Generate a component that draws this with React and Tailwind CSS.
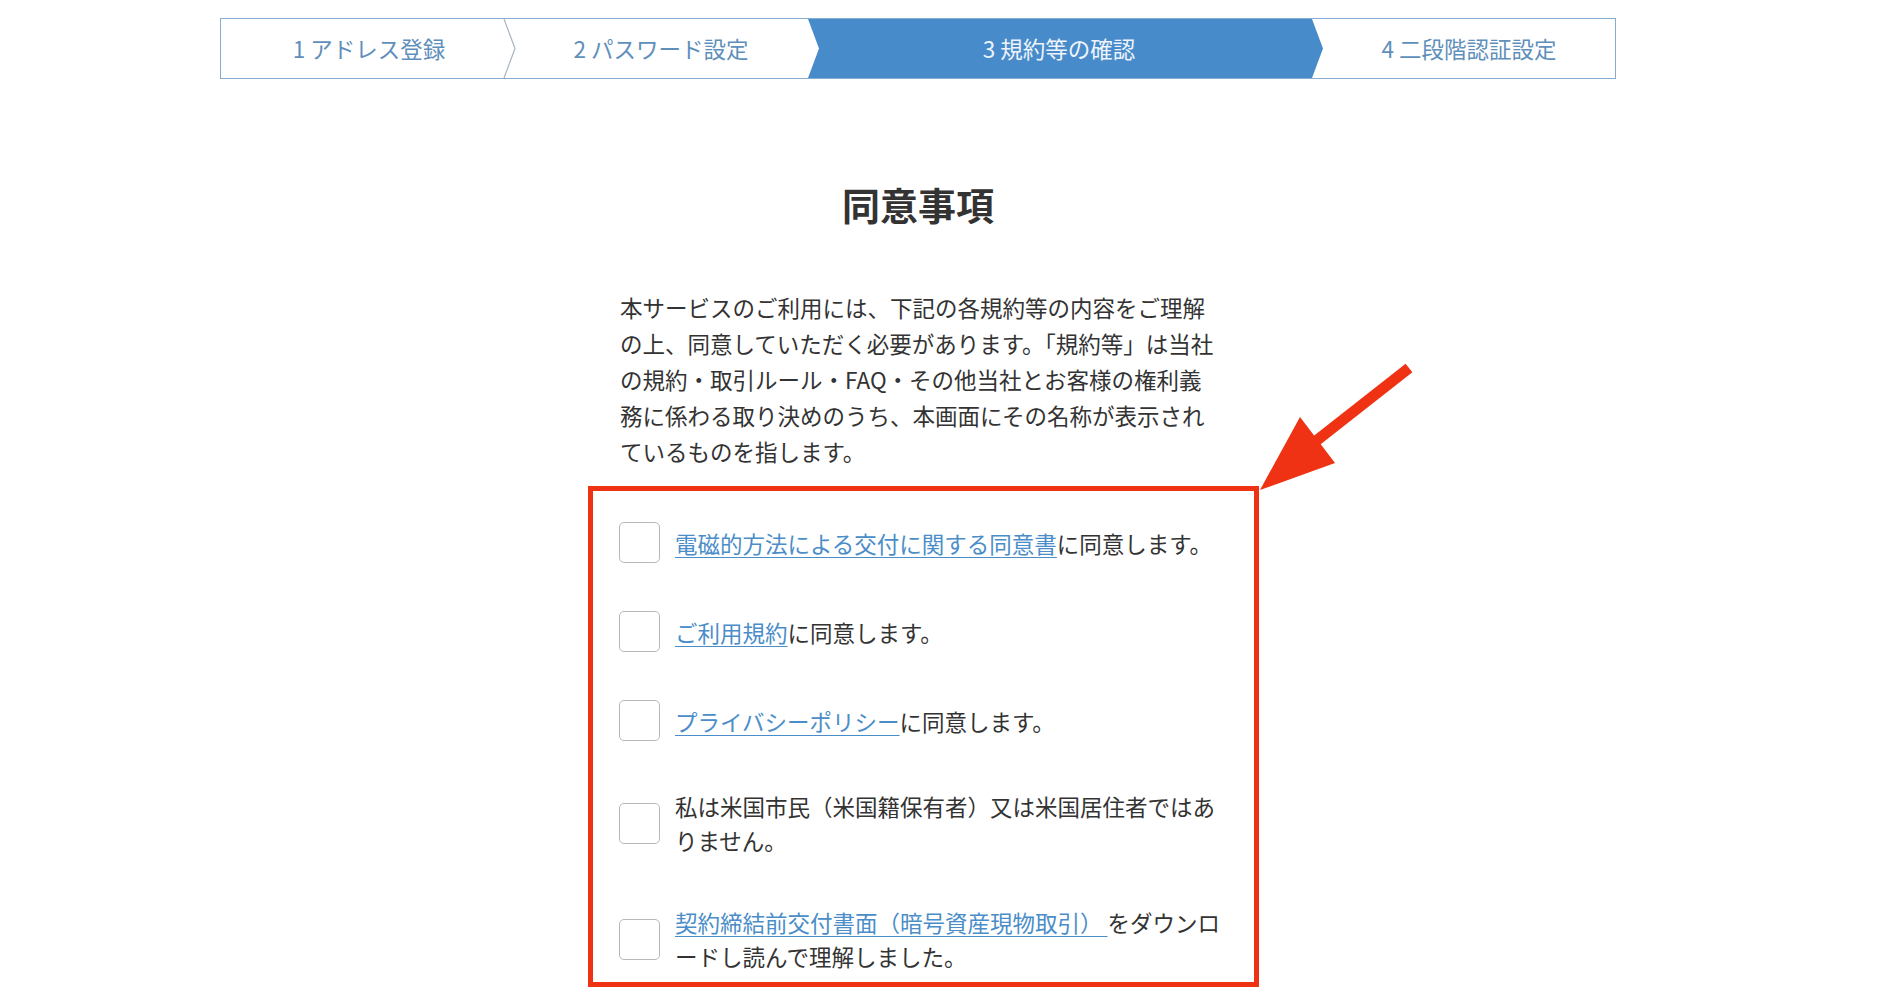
import React from "react";

const steps = [
  { label: "1 アドレス登録", w: "w-[283px]", pad: "pl-[13px]" },
  { label: "2 パスワード設定", w: "w-[304px]", pad: "pl-[10px]" },
  { label: "3 規約等の確認", w: "w-[515px]", pad: "pr-[13px]", active: true },
  { label: "4 二段階認証設定", w: "flex-1" },
];

function Checkbox() {
  return <div className="w-[41px] h-[41px] shrink-0 rounded-[5px] border-[1.5px] border-[#b8b8b8] bg-white" />;
}

function Link({ children }) {
  return (
    <a href="#" className="text-[#4a8dc8] underline decoration-1 underline-offset-[4px]">
      {children}
    </a>
  );
}

export default function App() {
  return (
    <div className="relative min-h-[997px] bg-white font-['Noto_Sans_CJK_JP',sans-serif] text-[#333]">
      <div className="ml-[220px] w-[1396px] pt-[18px]">
        {/* step bar */}
        <div className="flex h-[61px] border border-[#86acd0] text-[22.5px]">
          {steps.map((s, i) => (
            <div
              key={i}
              className={
                "relative flex items-center justify-center " +
                s.w +
                " " +
                (s.pad || "") +
                (s.active
                  ? " bg-[#488bcb] text-[#eef4fa] [clip-path:polygon(0_0,calc(100%-11px)_0,100%_50%,calc(100%-11px)_100%,0_100%,11px_50%)]"
                  : " text-[#5f8fbb]")
              }
            >
              {s.label}
              {i === 0 && (
                <svg className="absolute right-[-12px] top-0 h-full w-[13px]" viewBox="0 0 13 59" preserveAspectRatio="none">
                  <polyline points="1,0 12,29.5 1,59" fill="none" stroke="#a9b4bf" strokeWidth="1.2" />
                </svg>
              )}
            </div>
          ))}
        </div>

        <h1 className="mt-[98px] text-center text-[38px] font-bold leading-[53px] text-[#333]">同意事項</h1>

        <div className="ml-[400px] mt-[59px] w-[620px] text-[22.5px] leading-[36px]">
          <p className="whitespace-nowrap">本サービスのご利用には、下記の各規約等の内容をご理解</p>
          <p className="whitespace-nowrap">の上、同意していただく必要があります。「規約等」は当社</p>
          <p className="whitespace-nowrap">の規約・取引ルール・FAQ・その他当社とお客様の権利義</p>
          <p className="whitespace-nowrap">務に係わる取り決めのうち、本画面にその名称が表示され</p>
          <p className="whitespace-nowrap">ているものを指します。</p>
        </div>

        <div className="ml-[368px] mt-[17px] w-[671px] border-[5px] border-[#f03214] pl-[26px] pt-[31px] pb-[9px]">
          <div className="flex flex-col gap-[48px] text-[22.5px] leading-[34px]">
            <div className="flex items-center gap-[15px]">
              <Checkbox />
              <span className="whitespace-nowrap">
                <Link>電磁的方法による交付に関する同意書</Link>に同意します。
              </span>
            </div>
            <div className="flex items-center gap-[15px]">
              <Checkbox />
              <span>
                <Link>ご利用規約</Link>に同意します。
              </span>
            </div>
            <div className="flex items-center gap-[15px]">
              <Checkbox />
              <span>
                <Link>プライバシーポリシー</Link>に同意します。
              </span>
            </div>
            <div className="flex items-center gap-[15px]">
              <Checkbox />
              <span className="whitespace-nowrap">
                私は米国市民（米国籍保有者）又は米国居住者ではあ
                <br />
                りません。
              </span>
            </div>
            <div className="flex items-center gap-[15px]">
              <Checkbox />
              <span className="whitespace-nowrap">
                <Link>契約締結前交付書面（暗号資産現物取引） </Link>をダウンロ
                <br />
                ードし読んで理解しました。
              </span>
            </div>
          </div>
        </div>
      </div>

      {/* annotation arrow */}
      <svg className="absolute left-[1236px] top-[351px] h-[160px] w-[200px]" viewBox="0 0 200 160">
        <line x1="80" y1="90" x2="173" y2="17" stroke="#f03214" strokeWidth="11" strokeLinecap="butt" />
        <polygon points="24,139 64,66 99,112" fill="#f03214" />
      </svg>
    </div>
  );
}
